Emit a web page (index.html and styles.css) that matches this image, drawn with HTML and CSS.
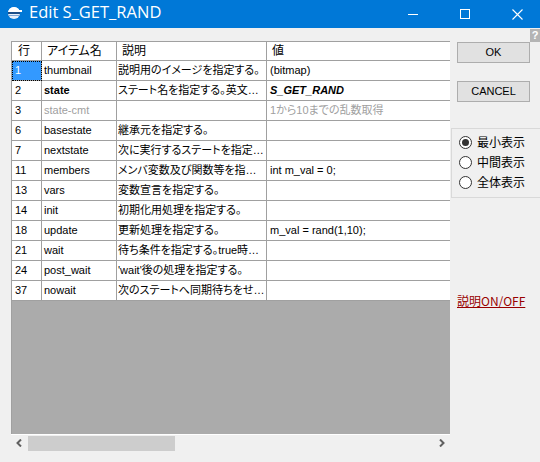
FILE: index.html
```html
<!DOCTYPE html>
<html lang="ja">
<head>
<meta charset="utf-8">
<title>Edit S_GET_RAND</title>
<link rel="stylesheet" href="styles.css">
</head>
<body>
<div class="window">
  <div class="titlebar">
    <svg class="app-icon" width="16" height="16" viewBox="0 0 16 16">
      <circle cx="7" cy="8" r="6" fill="#e8f0fa"/>
      <path d="M1 8 A6 6 0 0 1 13 8 Z" fill="#ffffff"/>
      <rect x="1" y="7" width="12" height="2" fill="#1c4f8a"/>
      <rect x="7" y="5" width="8" height="2" fill="#ffffff"/>
      <rect x="1" y="10" width="12" height="1" fill="#7fa7d6"/>
    </svg>
    <div class="title">Edit S_GET_RAND</div>
    <div class="ctrl"><svg width="10" height="10" viewBox="0 0 10 10"><rect x="0" y="5" width="10" height="1" fill="#fff"/></svg></div>
    <div class="ctrl"><svg width="10" height="10" viewBox="0 0 10 10"><rect x="0.5" y="0.5" width="9" height="9" fill="none" stroke="#fff" stroke-width="1"/></svg></div>
    <div class="ctrl close"><svg width="11" height="11" viewBox="0 0 11 11"><path d="M0.5 0.5 L10.5 10.5 M10.5 0.5 L0.5 10.5" stroke="#fff" stroke-width="1.1" fill="none"/></svg></div>
  </div>

  <div class="content">
    <div class="left">
      <div class="grid">
        <div class="row head">
          <div class="c c1">行</div>
          <div class="c c2">アイテム名</div>
          <div class="c c3">説明</div>
          <div class="c c4">値</div>
        </div>
        <div class="row">
          <div class="c c1 sel">1</div>
          <div class="c c2">thumbnail</div>
          <div class="c c3">説明用のイメージを指定する。</div>
          <div class="c c4">(bitmap)</div>
        </div>
        <div class="row">
          <div class="c c1">2</div>
          <div class="c c2 bold">state</div>
          <div class="c c3">ステート名を指定する。英文…</div>
          <div class="c c4 bolditalic">S_GET_RAND</div>
        </div>
        <div class="row">
          <div class="c c1">3</div>
          <div class="c c2 dim">state-cmt</div>
          <div class="c c3"></div>
          <div class="c c4 dim">1から10までの乱数取得</div>
        </div>
        <div class="row">
          <div class="c c1">6</div>
          <div class="c c2">basestate</div>
          <div class="c c3">継承元を指定する。</div>
          <div class="c c4"></div>
        </div>
        <div class="row">
          <div class="c c1">7</div>
          <div class="c c2">nextstate</div>
          <div class="c c3">次に実行するステートを指定…</div>
          <div class="c c4"></div>
        </div>
        <div class="row">
          <div class="c c1">11</div>
          <div class="c c2">members</div>
          <div class="c c3">メンバ変数及び関数等を指…</div>
          <div class="c c4">int m_val = 0;</div>
        </div>
        <div class="row">
          <div class="c c1">13</div>
          <div class="c c2">vars</div>
          <div class="c c3">変数宣言を指定する。</div>
          <div class="c c4"></div>
        </div>
        <div class="row">
          <div class="c c1">14</div>
          <div class="c c2">init</div>
          <div class="c c3">初期化用処理を指定する。</div>
          <div class="c c4"></div>
        </div>
        <div class="row">
          <div class="c c1">18</div>
          <div class="c c2">update</div>
          <div class="c c3">更新処理を指定する。</div>
          <div class="c c4">m_val = rand(1,10);</div>
        </div>
        <div class="row">
          <div class="c c1">21</div>
          <div class="c c2">wait</div>
          <div class="c c3">待ち条件を指定する。true時…</div>
          <div class="c c4"></div>
        </div>
        <div class="row">
          <div class="c c1">24</div>
          <div class="c c2">post_wait</div>
          <div class="c c3">'wait'後の処理を指定する。</div>
          <div class="c c4"></div>
        </div>
        <div class="row">
          <div class="c c1">37</div>
          <div class="c c2">nowait</div>
          <div class="c c3">次のステートへ同期待ちをせ…</div>
          <div class="c c4"></div>
        </div>
        <div class="empty"></div>
        <div class="hscroll">
          <div class="arrow"><svg width="7" height="8" viewBox="0 0 7 8"><path d="M5 0.5 L1.5 4 L5 7.5" stroke="#606060" stroke-width="2" fill="none"/></svg></div>
          <div class="thumb"></div>
          <div class="track"></div>
          <div class="arrow"><svg width="7" height="8" viewBox="0 0 7 8"><path d="M2 0.5 L5.5 4 L2 7.5" stroke="#606060" stroke-width="2" fill="none"/></svg></div>
        </div>
      </div>
    </div>

    <div class="right">
      <div class="help-row"><div class="help">?</div></div>
      <div class="btn">OK</div>
      <div class="btn cancel">CANCEL</div>
      <div class="group">
        <div class="radio"><span class="dot on"></span><span class="label">最小表示</span></div>
        <div class="radio"><span class="dot"></span><span class="label">中間表示</span></div>
        <div class="radio"><span class="dot"></span><span class="label">全体表示</span></div>
      </div>
      <div class="link">説明ON/OFF</div>
    </div>
  </div>
</div>
</body>
</html>
```

FILE: styles.css
```css
* { box-sizing: border-box; }
html, body { margin: 0; padding: 0; }
body {
  width: 540px;
  height: 462px;
  overflow: hidden;
  background: #f0f0f0;
  font-family: "Liberation Sans", "Noto Sans CJK JP", sans-serif;
  color: #000;
}
.window { width: 540px; height: 462px; overflow: hidden; }

/* title bar */
.titlebar {
  height: 28px;
  background: #0078d7;
  color: #fff;
  display: flex;
  align-items: flex-start;
}
.app-icon { margin: 5px 6px 0 7px; flex: none; }
.title {
  flex: 1;
  font-family: "Open Sans", "Noto Sans", sans-serif;
  font-size: 16.5px;
  line-height: 24px;
}
.ctrl {
  width: 52px;
  height: 28px;
  display: flex;
  align-items: center;
  justify-content: center;
  flex: none;
}
.ctrl.close { width: 49px; padding-left: 3px; }

/* main */
.content { display: flex; height: 434px; }
.left { padding: 13px 0 0 11px; flex: none; }
.grid {
  width: 439px;
  height: 410px;
  display: flex;
  flex-direction: column;
  border-left: 1px solid #a0a0a0;
  border-top: 1px solid #a0a0a0;
  background: #ababab;
}
.row { display: flex; height: 20px; background: #fff; flex: none; }
.row.head { height: 19px; }
.c {
  border-bottom: 1px solid #a0a0a0;
  border-right: 1px solid #a0a0a0;
  font-size: 11px;
  line-height: 19px;
  padding-left: 2px;
  white-space: nowrap;
  overflow: hidden;
  font-feature-settings: "palt";
}
.head .c { font-size: 12px; line-height: 18px; padding-left: 5px; }
.c1 { width: 30px; padding-left: 3px; }
.c2 { width: 75px; }
.c3 { width: 150px; padding-left: 1px; }
.c4 { width: 183px; border-right: none; padding-left: 3px; }
.head .c1 { padding-left: 6px; }
.c.sel {
  background: #3399ff;
  color: #fff;
  outline: 1px dotted #000;
  outline-offset: -1px;
}
.bold { font-weight: bold; }
.bolditalic { font-weight: bold; font-style: italic; }
.dim { color: #a0a0a0; }
.empty { flex: 1; background: #ababab; }

.hscroll {
  height: 17px;
  border-top: 1px solid #fff;
  background: #f0f0f0;
  display: flex;
  align-items: stretch;
  flex: none;
  margin-left: -1px;
}
.arrow {
  width: 17px;
  display: flex;
  align-items: center;
  justify-content: center;
}
.thumb { width: 147px; background: #cdcdcd; margin-top: 1px; }
.track { flex: 1; }

/* right panel */
.right { width: 89px; flex: none; display: flex; flex-direction: column; margin-left: 1px; }
.help-row { height: 14px; display: flex; justify-content: flex-end; }
.help {
  width: 10px;
  height: 13px;
  margin-top: 1px;
  background: #b4b4b4;
  color: #fff;
  font-size: 11px;
  font-weight: bold;
  line-height: 13px;
  text-align: center;
}
.btn {
  margin-left: 6px;
  width: 73px;
  height: 21px;
  border: 1px solid #adadad;
  background: #e1e1e1;
  font-size: 11px;
  line-height: 19px;
  text-align: center;
}
.btn.cancel { margin-top: 18px; }
.group {
  margin-top: 26px;
  width: 100px;
  height: 70px;
  border: 1px solid #d9d9d9;
  padding: 3px 0 0 7px;
}
.radio { height: 20px; display: flex; align-items: center; }
.dot {
  width: 13px;
  height: 13px;
  border: 1px solid #333;
  border-radius: 50%;
  background: #fff;
  display: flex;
  align-items: center;
  justify-content: center;
  flex: none;
}
.dot.on::after {
  content: "";
  width: 7px;
  height: 7px;
  border-radius: 50%;
  background: #333;
}
.label {
  margin-left: 5px;
  font-family: "Noto Sans CJK JP", sans-serif;
  font-size: 12px;
  line-height: 16px;
}
.link {
  margin: 96px 0 0 6px;
  color: #990000;
  text-decoration: underline;
  font-family: "Noto Sans CJK JP", sans-serif;
  font-size: 12px;
  line-height: 14px;
  white-space: nowrap;
}
```
